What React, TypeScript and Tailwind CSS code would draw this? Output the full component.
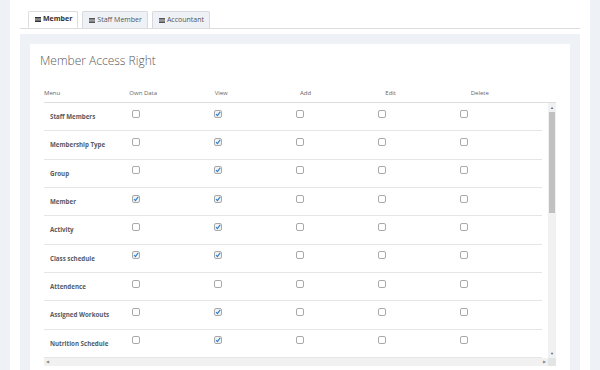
import React from 'react'

type Row = { name: string; own: boolean; view: boolean }

const rows: Row[] = [
  { name: 'Staff Members', own: false, view: true },
  { name: 'Membership Type', own: false, view: true },
  { name: 'Group', own: false, view: true },
  { name: 'Member', own: true, view: true },
  { name: 'Activity', own: false, view: true },
  { name: 'Class schedule', own: true, view: true },
  { name: 'Attendence', own: false, view: false },
  { name: 'Assigned Workouts', own: false, view: true },
  { name: 'Nutrition Schedule', own: false, view: true },
]

const headers = ['Menu', 'Own Data', 'View', 'Add', 'Edit', 'Delete']

function BarsIcon() {
  return (
    <svg width="6" height="5" viewBox="0 0 6 5" className="shrink-0">
      <rect x="0" y="0" width="6" height="1" fill="currentColor" />
      <rect x="0" y="1.35" width="6" height="1" fill="currentColor" />
      <rect x="0" y="2.7" width="6" height="1" fill="currentColor" />
      <rect x="0" y="4" width="6" height="1" fill="currentColor" />
    </svg>
  )
}

function Check({ on }: { on: boolean }) {
  return (
    <div className={`w-[8px] h-[8px] mb-[6px] rounded-[2px] border border-[#a9a9a9] flex items-center justify-center ${on ? 'bg-[#f2f2f2]' : 'bg-white'}`}>
      {on && (
        <svg width="6" height="6" viewBox="0 0 6 6">
          <path d="M1 3.2 L2.4 4.6 L5.2 0.8" stroke="#2a7fd4" strokeWidth="1.1" fill="none" />
        </svg>
      )}
    </div>
  )
}

function Tab({ label, active }: { label: string; active?: boolean }) {
  return (
    <div
      className={
        active
          ? 'h-[17px] -mb-px flex items-center gap-[2px] pl-[6px] pr-[5px] bg-white border border-[#dcdcdc] border-b-white rounded-t-[2px] text-[#333] font-bold'
          : 'h-[17px] flex items-center gap-[2px] pl-[6px] pr-[5px] bg-[#eef1f6] border border-[#d6d9de] border-b-0 rounded-t-[2px] text-[#555]'
      }
    >
      <BarsIcon />
      <span>{label}</span>
    </div>
  )
}

export default function App() {
  return (
    <div className="w-[600px] h-[370px] overflow-hidden bg-[#eef1f6] px-[10px] flex" style={{ fontFamily: '"Open Sans", "Liberation Sans", sans-serif' }}>
      <div className="flex-1 bg-white px-[10px] pt-[11px]">
        <div className="flex gap-[4px] pl-[8px] border-b border-[#dcdcdc] text-[7px]">
          <Tab label="Member" active />
          <Tab label="Staff Member" />
          <Tab label="Accountant" />
        </div>

        <div className="mt-[5px] bg-[#eef1f6] px-[10px] pt-[10px] h-[400px]">
          <div className="bg-white px-[10px] pt-[9px] h-full">
            <h1 className="text-[12px] leading-[16px] font-light text-[#5a5a5a]">Member Access Right</h1>

            <div className="mt-[15px] mx-[4px]">
              <div className="grid grid-cols-6 w-[512px] h-[19px] items-center border-b border-[#dddddd] text-[6px] text-[#666]">
                {headers.map(h => (
                  <div key={h}>{h}</div>
                ))}
              </div>

              <div className="flex w-[512px] h-[255px]">
                <div className="flex-1 overflow-hidden">
                  {rows.map(r => (
                    <div key={r.name} className="w-[498px] h-[28.33px] flex items-center border-b border-[#e6e6e6]">
                      <div className="w-[88px] pl-[6px] text-[6.2px] font-bold text-[#555b63]">{r.name}</div>
                      <div className="w-[82px]"><Check on={r.own} /></div>
                      <div className="w-[82px]"><Check on={r.view} /></div>
                      <div className="w-[82px]"><Check on={false} /></div>
                      <div className="w-[82px]"><Check on={false} /></div>
                      <div className="w-[82px]"><Check on={false} /></div>
                    </div>
                  ))}
                </div>
                <div className="w-[8px] bg-[#f1f1f1] flex flex-col items-center">
                  <div className="h-[9px] flex items-center text-[4px] text-[#666]">▲</div>
                  <div className="w-[6px] h-[101px] bg-[#c1c1c1]" />
                  <div className="flex-1" />
                  <div className="h-[9px] flex items-center text-[4px] text-[#666]">▼</div>
                </div>
              </div>

              <div className="flex w-[512px] h-[8px]">
                <div className="flex-1 bg-[#f1f1f1] flex items-center justify-between px-[2px] text-[4px] text-[#888]">
                  <span>◀</span>
                  <span>▶</span>
                </div>
                <div className="w-[8px] bg-[#e4e4e4]" />
              </div>
            </div>
          </div>
        </div>
      </div>
    </div>
  )
}
